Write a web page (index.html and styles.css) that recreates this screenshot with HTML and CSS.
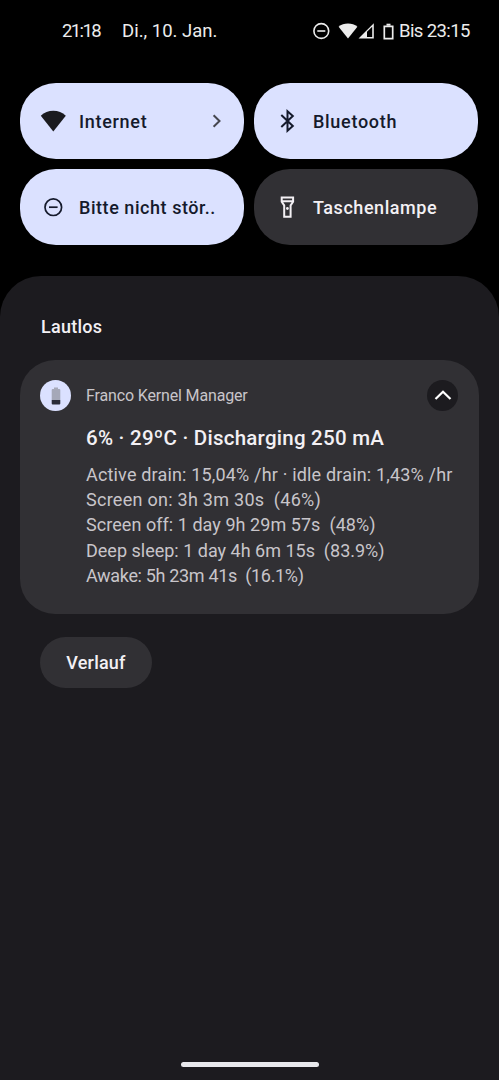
FILE: index.html
```
<!DOCTYPE html>
<html lang="de">
    <head>
        <meta charset="UTF-8">
        <meta name="viewport" content="width=device-width, initial-scale=1.0">
        <title>Benachrichtigungen</title>
        <link rel="stylesheet" href="styles.css">
    </head>
    <body>
        <header class="status">
            <span class="time">21:18</span>
            <span class="date">Di., 10. Jan.</span>
            <div class="status_icons">
                <svg class="dnd" width="18" height="18" viewBox="0 0 18 18" fill="none" stroke="currentColor" stroke-width="1.6">
                    <circle cx="9.3" cy="9" r="7.4"/>
                    <path d="M5.3 9h8"/>
                </svg>
                <svg class="wifi" width="20" height="16" viewBox="0 0 20 16" fill="currentColor">
                    <path d="M10 15.6L.6 3.8C3.2 1.6 6.4.5 10 .5s6.8 1.1 9.4 3.3z"/>
                </svg>
                <svg class="signal" width="16" height="16" viewBox="0 0 16 16" fill="currentColor">
                    <path fill-rule="evenodd" d="M.5 15.5L15.8.2v15.3zM9 8.8v5.2h5.2V3.7z"/>
                </svg>
                <svg class="battery" width="11" height="17" viewBox="0 0 11 17" fill="none" stroke="currentColor" stroke-width="1.7">
                    <path d="M1.3 3.3h8.4v12.4H1.3z"/>
                    <path d="M3.5 1.7h4" stroke-width="2"/>
                </svg>
                <span class="until">Bis 23:15</span>
            </div>
        </header>

        <section class="tiles">
            <div class="tile active">
                <svg width="26" height="26" viewBox="0 0 26 26" fill="#1b1b1f">
                    <path d="M13.3 23.5L.8 7.7C4.3 4.4 8.5 2.7 13.3 2.7s9 1.7 12.5 5z"/>
                </svg>
                <span class="label internet">Internet</span>
                <svg class="chevron" width="10" height="14" viewBox="0 0 10 14" fill="none" stroke="#45464f" stroke-width="2">
                    <path d="M1.6 1.3L7.5 7l-5.9 5.7"/>
                </svg>
            </div>
            <div class="tile active">
                <svg width="26" height="26" viewBox="0 0 26 26" fill="none" stroke="currentColor" stroke-width="2">
                    <path d="M7.3 7L18.8 18l-5.3 4.7V3.3L18.8 8 7.3 19"/>
                </svg>
                <span class="label bluetooth">Bluetooth</span>
            </div>
            <div class="tile active">
                <svg width="26" height="26" viewBox="0 0 26 26" fill="none" stroke="currentColor" stroke-width="1.7">
                    <circle cx="13.3" cy="13.2" r="8.3"/>
                    <path d="M9 13.2h8.600"/>
                </svg>
                <span class="label">Bitte nicht stör..</span>
            </div>
            <div class="tile">
                <svg width="26" height="26" viewBox="0 0 26 26" fill="none" stroke="currentColor" stroke-width="2">
                    <path d="M7.7 3.6h11.4v4.2l-2.5 3.6v11.4h-6.4V11.4L7.7 7.8zM7.7 7.2h11.4"/>
                    <circle cx="13.4" cy="14.5" r="1.4" fill="currentColor" stroke="none"/>
                </svg>
                <span class="label">Taschenlampe</span>
            </div>
        </section>

        <main class="shade">
            <h2 class="section_title">Lautlos</h2>

            <article class="notification">
                <div class="avatar">
                    <svg width="10" height="18" viewBox="0 0 10 18">
                        <path d="M3 .5h4v1.5h1.3q1 0 1 1V13H.7V3q0-1 1-1H3z" fill="#a5a8b8"/>
                        <path d="M.7 13h8.6v3.5q0 1-1 1H1.7q-1 0-1-1z" fill="#2b2d3a"/>
                    </svg>
                </div>
                <div class="content">
                    <div class="app_name">Franco Kernel Manager</div>
                    <h3 class="title">6% · 29ºC · Discharging 250 mA</h3>
                    <div class="lines">
                        <div class="drain">Active drain: 15,04% /hr · idle drain: 1,43% /hr</div>
                        <div class="screen_on">Screen on: 3h 3m 30s&nbsp; (46%)</div>
                        <div class="screen_off">Screen off: 1 day 9h 29m 57s&nbsp; (48%)</div>
                        <div>Deep sleep: 1 day 4h 6m 15s&nbsp; (83.9%)</div>
                        <div class="awake">Awake: 5h 23m 41s&nbsp; (16.1%)</div>
                    </div>
                </div>
                <div class="collapse">
                    <svg width="18" height="12" viewBox="0 0 18 12" fill="none" stroke="#fff" stroke-width="2.2">
                        <path d="M1.5 9L9 1.7 16.5 9"/>
                    </svg>
                </div>
            </article>

            <button class="history">Verlauf</button>

            <div class="home_bar"></div>
        </main>
    </body>
</html>
```
FILE: styles.css
```
* {
    box-sizing: border-box;
}

body {
    --surface: #1c1b1f;
    --card: #313034;
    --accent: #dbe1ff;
    --text: #f3f0f4;
    --muted: #c8c5ca;
    margin: 0;
    height: 1080px;
    display: flex;
    flex-direction: column;
    background: #000;
    color: var(--text);
    font-family: Roboto, "Liberation Sans", sans-serif;
    overflow: hidden;
    white-space: nowrap;
}

svg {
    display: block;
    flex: none;
}

.status {
    display: flex;
    align-items: center;
    height: 62px;
    padding: 0 0 0 62px;
    font-size: 18.5px;
    color: #ececec;
}
.status .time {
    width: 60px;
    letter-spacing: -1.6px;
}
.status_icons {
    display: flex;
    align-items: center;
    width: 187px;
    margin-left: auto;
}
.status .wifi {
    margin-left: 8px;
}
.status .battery {
    margin-left: 9px;
}
.status .until {
    margin-left: 5px;
    letter-spacing: -.6px;
}

.tiles {
    display: grid;
    grid-template-columns: 224px 224px;
    grid-auto-rows: 76px;
    gap: 10px;
    padding: 21px 20px 0;
}
.tile {
    display: flex;
    align-items: center;
    border-radius: 36px;
    padding: 0 22px 0 20px;
    background: var(--card);
}
.tile.active {
    background: var(--accent);
    color: #151a2c;
}
.tile .label {
    margin-left: 13px;
    font-size: 18px;
    font-weight: 500;
    letter-spacing: .55px;
}
.tile .internet,
.tile .bluetooth {
    letter-spacing: .7px;
}
.tile .chevron {
    margin-left: auto;
}

.shade {
    flex: 1;
    margin-top: 31px;
    padding: 0 20px;
    background: var(--surface);
    border-radius: 41px 41px 0 0;
    display: flex;
    flex-direction: column;
    align-items: flex-start;
}
.section_title {
    margin: 38px 0 0 21px;
    height: 46px;
    line-height: 26px;
    font-size: 18px;
    font-weight: 500;
    letter-spacing: .25px;
}

.notification {
    width: 459px;
    height: 254px;
    padding: 20px 20px 0;
    border-radius: 35px;
    background: var(--card);
    display: flex;
}
.avatar,
.collapse {
    width: 31px;
    height: 31px;
    border-radius: 50%;
    display: flex;
    align-items: center;
    justify-content: center;
    flex: none;
}
.avatar {
    background: var(--accent);
}
.collapse {
    background: var(--surface);
}
.notification .content {
    width: 341px;
    margin-left: 15px;
}
.app_name {
    height: 31px;
    line-height: 31px;
    font-size: 16px;
    letter-spacing: -.15px;
    color: var(--muted);
}
.notification .title {
    margin: 12px 0 0;
    line-height: 30px;
    font-size: 20.5px;
    font-weight: 500;
    letter-spacing: .25px;
}
.lines {
    margin-top: 8.5px;
    font-size: 18px;
    line-height: 25.4px;
    color: var(--muted);
}
.drain {
    letter-spacing: .17px;
}
.screen_on {
    letter-spacing: .27px;
}
.screen_off {
    letter-spacing: .05px;
}
.awake {
    letter-spacing: -.33px;
}

.history {
    margin: 23px 0 0 20px;
    width: 112px;
    height: 51px;
    border: none;
    border-radius: 26px;
    background: var(--card);
    color: var(--text);
    font: 500 18px Roboto, "Liberation Sans", sans-serif;
    letter-spacing: .2px;
}

.home_bar {
    width: 138px;
    height: 5px;
    margin: auto auto 13px;
    border-radius: 3px;
    background: #e8e8ec;
}
```
